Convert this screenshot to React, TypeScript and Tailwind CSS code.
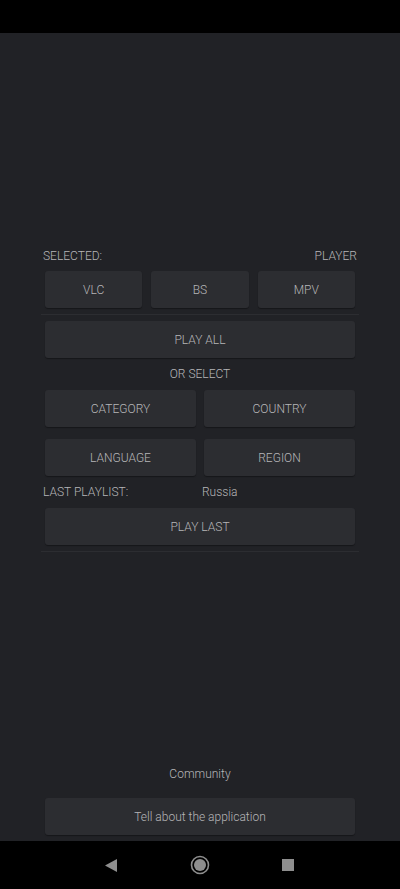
import React from "react";

const Btn = ({ children, className = "" }: { children: React.ReactNode; className?: string }) => (
  <div
    className={
      "h-[37px] flex items-center justify-center rounded-[3px] bg-[#2c2d31] text-[12px] font-light text-[#b6b6b8] shadow-[0_1px_1px_rgba(0,0,0,0.35)] " +
      className
    }
  >
    {children}
  </div>
);

export default function App() {
  return (
    <div
      className="w-[400px] h-[889px] flex flex-col bg-[#212226] overflow-hidden"
      style={{ fontFamily: "Roboto, 'Noto Sans', sans-serif" }}
    >
      <div className="h-[33px] bg-black shrink-0" />
      <div className="flex-1 flex flex-col px-[41px]">
        <div className="pt-[215px] flex flex-col">
          <div className="flex justify-between px-[2px] h-4 leading-4 text-[12px] font-light text-[#b6b6b8]">
            <span>SELECTED:</span>
            <span>PLAYER</span>
          </div>
          <div className="mt-[7px] px-[4px] grid grid-cols-3 gap-[9px]">
            <Btn>VLC</Btn>
            <Btn>BS</Btn>
            <Btn>MPV</Btn>
          </div>
          <div className="mt-[6px] h-px bg-[#2c2d31]" />
          <div className="mt-[6px] px-[4px]">
            <Btn>PLAY ALL</Btn>
          </div>
          <div className="mt-[8px] h-4 leading-4 text-center text-[12px] font-light text-[#b6b6b8]">OR SELECT</div>
          <div className="mt-[8px] px-[4px] grid grid-cols-2 gap-x-[8px] gap-y-[12px]">
            <Btn>CATEGORY</Btn>
            <Btn>COUNTRY</Btn>
            <Btn>LANGUAGE</Btn>
            <Btn>REGION</Btn>
          </div>
          <div className="mt-[8px] grid grid-cols-2 px-[2px] h-4 leading-4 text-[12px] font-light text-[#b6b6b8]">
            <span>LAST PLAYLIST:</span>
            <span className="pl-[2px]">Russia</span>
          </div>
          <div className="mt-[8px] px-[4px]">
            <Btn>PLAY LAST</Btn>
          </div>
          <div className="mt-[6px] h-px bg-[#2c2d31]" />
        </div>
        <div className="flex-1" />
        <div className="h-4 leading-4 text-center text-[12px] font-light text-[#b6b6b8]">Community</div>
        <div className="mt-[16px] mb-[6px] px-[4px]">
          <Btn>Tell about the application</Btn>
        </div>
      </div>
      <div className="h-[48px] bg-black shrink-0 flex items-center justify-center relative">
        <svg width="400" height="48" viewBox="0 0 400 48">
          <polygon points="117,18 117,31 105,24.5" fill="#8e8e8e" />
          <circle cx="200" cy="24" r="8.5" fill="none" stroke="#8e8e8e" strokeWidth="1.6" />
          <circle cx="200" cy="24" r="6" fill="#8e8e8e" />
          <rect x="282" y="18" width="12" height="12" fill="#8e8e8e" />
        </svg>
      </div>
    </div>
  );
}
